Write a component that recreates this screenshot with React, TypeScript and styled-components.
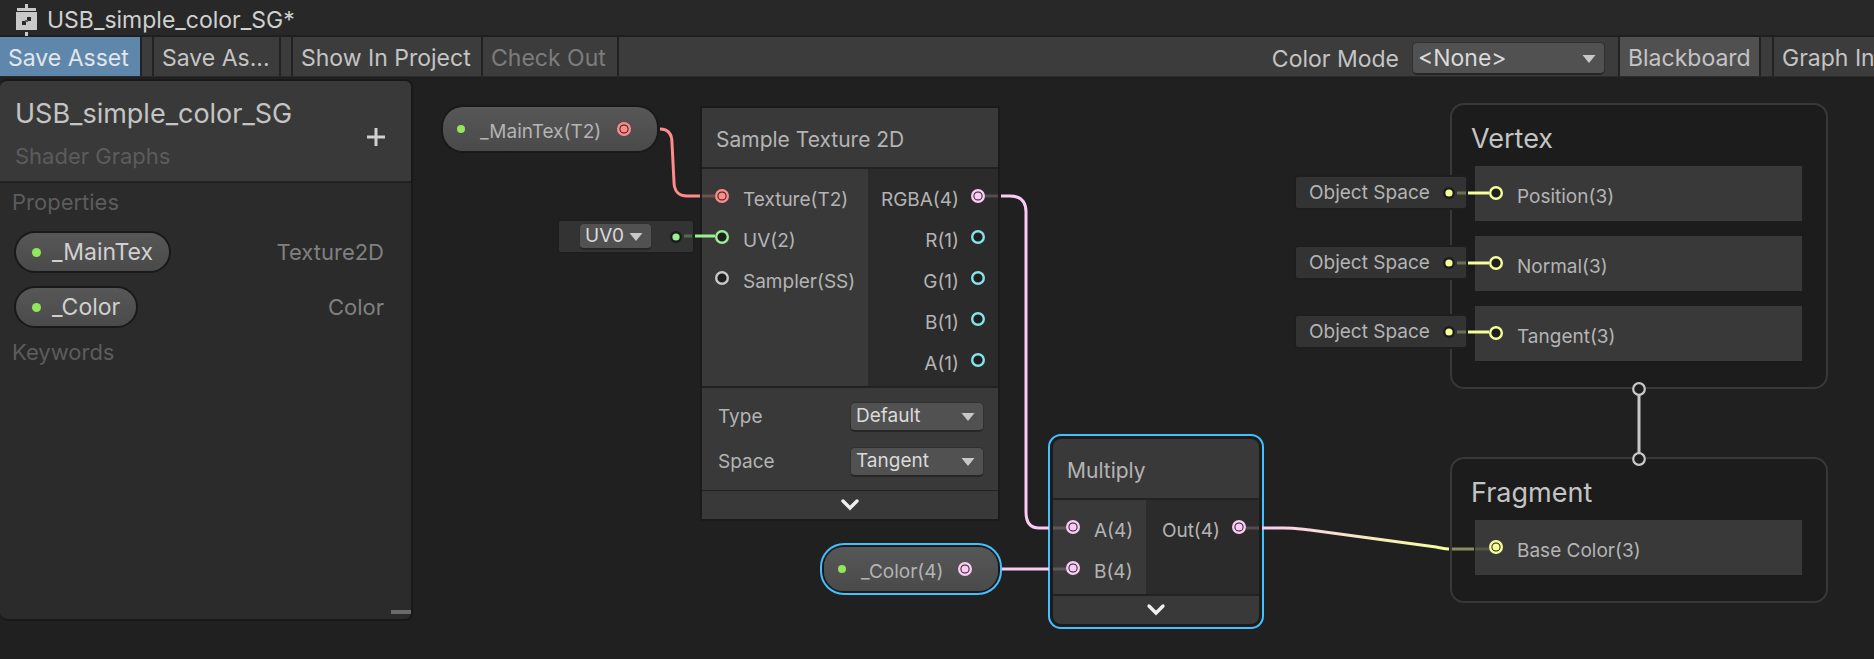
import React from "react";
import styled, { createGlobalStyle, css } from "styled-components";

const color = {
  text: "#c4c4c4",
  label: "#b4b4b4",
  muted: "#5c5c5c",
  panel: "#393939",
  panelDark: "#2b2b2b",
  canvas: "#202020",
  line: "#222222",
  select: "#515151",
  texture: "#ff8b8b",
  vec1: "#84e4e7",
  vec2: "#9aef92",
  vec3: "#f6ff9a",
  vec4: "#fbcbf4",
  exposed: "#92e65a",
  plain: "#c8c8c8",
  selected: "#44c0ff",
};

const GlobalStyle = createGlobalStyle`
  *, *::before, *::after { box-sizing: border-box; }
  html, body { margin: 0; background: ${color.canvas}; }
  body { font-family: Inter, "Liberation Sans", sans-serif; color: ${color.text}; }
  button, select { font: inherit; color: inherit; }
`;

const Page = styled.div`
  display: flex;
  flex-direction: column;
  min-height: 100vh;
  overflow: hidden;
`;

/* Window tab and toolbar */

const TitleBar = styled.header`
  display: flex;
  align-items: center;
  gap: 10px;
  height: 37px;
  padding: 4px 16px 0;
  background: #282828;
  border-bottom: 2px solid #1f1f1f;
`;

const TitleText = styled.h1`
  margin: 0;
  font-size: 23px;
  font-weight: 400;
  line-height: 32px;
  color: #d0d0d0;
`;

const Toolbar = styled.nav`
  display: flex;
  height: 40px;
  overflow: hidden;
  background: #3c3c3c;
  border-bottom: 1px solid #2a2a2a;
`;

const ToolGroup = styled.div`
  display: flex;
  flex: none;
`;

const Spacer = styled.div`
  flex: 1 1 0;
`;

const ToolGap = styled.div<{ $width: number }>`
  flex: none;
  width: ${(p) => p.$width}px;
`;

const ToolButton = styled.button<{ $tone?: "primary" | "active"; $bordered?: boolean; $width?: number }>`
  flex: none;
  width: ${(p) => (p.$width ? `${p.$width}px` : "auto")};
  padding: 3px 0 0 8px;
  border: 0;
  background: transparent;
  font-size: 23px;
  line-height: 36px;
  white-space: nowrap;
  text-align: left;
  border-right: 2px solid ${color.line};
  ${(p) => p.$bordered && css`border-left: 2px solid ${color.line};`}
  ${(p) => p.$tone === "primary" && css`background: #5f86ab; color: #e0e6ec;`}
  ${(p) => p.$tone === "active" && css`background: #505050;`}
  &:disabled { color: #7c7c7c; }
  &:last-child:not(:disabled) { border-right: 0; }
`;

const ModeLabel = styled.label`
  display: flex;
  align-items: center;
  gap: 13px;
  font-size: 23px;
  padding: 4px 13px 0 0;
`;

/* Drop-down */

const SelectBox = styled.span<{ $width: number; $height: number }>`
  position: relative;
  display: flex;
  flex: none;
  align-items: center;
  width: ${(p) => p.$width}px;
  height: ${(p) => p.$height}px;
`;

const Select = styled.select<{ $size: number }>`
  appearance: none;
  width: 100%;
  height: 100%;
  margin: 0;
  padding: 0 5px;
  border: 1px solid #303030;
  border-bottom: 2px solid #262626;
  border-radius: 5px;
  background: ${color.select};
  color: #dadada;
  font-size: ${(p) => p.$size}px;
  line-height: 24px;
`;

const Caret = styled.svg`
  position: absolute;
  right: 9px;
  fill: #c8c8c8;
  pointer-events: none;
`;

type DropdownProps = { id: string; value: string; options: string[]; width: number; height: number; size: number; label?: string };

function Dropdown({ id, value, options, width, height, size, label }: DropdownProps) {
  return (
    <SelectBox $width={width} $height={height}>
      <Select id={id} aria-label={label} defaultValue={value} $size={size}>
        {options.map((o) => (
          <option key={o}>{o}</option>
        ))}
      </Select>
      <Caret width="14" height="8" viewBox="0 0 14 8" aria-hidden="true">
        <path d="M0.5 0H13.5L7 8Z" />
      </Caret>
    </SelectBox>
  );
}

/* Blackboard */

const Workspace = styled.main`
  position: relative;
  display: flex;
  align-items: stretch;
  flex: 1;
  overflow: hidden;
`;

const Blackboard = styled.aside`
  display: flex;
  flex-direction: column;
  width: 413px;
  margin: 2px 0 38px;
  border: 2px solid #191919;
  border-left: 0;
  border-radius: 8px;
  background: ${color.panelDark};
  overflow: hidden;
`;

const BoardHeader = styled.div`
  display: flex;
  align-items: center;
  justify-content: space-between;
  height: 102px;
  padding: 0 25px 0 15px;
  background: ${color.panel};
  border-bottom: 2px solid ${color.line};
`;

const BoardTitle = styled.h2`
  margin: 0;
  padding-top: 4px;
  font-size: 27px;
  font-weight: 400;
  line-height: 40px;
`;

const BoardSubtitle = styled.p`
  margin: 0;
  padding: 8px 0 2px;
  font-size: 22px;
  line-height: 28px;
  color: ${color.muted};
`;

const AddButton = styled.button`
  display: flex;
  padding: 0;
  border: 0;
  margin-top: 12px;
  background: transparent;
`;

const BoardBody = styled.div`
  flex: 1;
  padding: 0 27px 0 14px;
`;

const SectionTitle = styled.h3`
  margin: 0 -2px;
  padding-top: 3px;
  font-size: 22px;
  font-weight: 400;
  line-height: 32px;
  color: ${color.muted};
`;

const PropertyList = styled.ul`
  display: grid;
  gap: 13px;
  margin: 0;
  padding: 13px 0 5px;
  list-style: none;
`;

const PropertyRow = styled.li`
  display: flex;
  align-items: center;
  justify-content: space-between;
`;

const PropertyPill = styled.span`
  display: flex;
  align-items: center;
  gap: 11px;
  height: 42px;
  padding: 0 16px;
  border: 2px solid #191919;
  border-radius: 21px;
  background: linear-gradient(#575757, #4a4a4a);
  font-size: 23px;
  color: #d0d0d0;
`;

const Dot = styled.i<{ $size: number }>`
  flex: none;
  width: ${(p) => p.$size}px;
  height: ${(p) => p.$size}px;
  border-radius: 50%;
  background: ${color.exposed};
`;

const PropertyType = styled.span`
  font-size: 22px;
  line-height: 32px;
  color: #808080;
`;

const ResizeGrip = styled.div`
  align-self: flex-end;
  width: 20px;
  height: 4px;
  margin-bottom: 5px;
  background: #6a6a6a;
`;

/* Graph nodes, placed on the free canvas */

type Spot = { $x: number; $y: number; $w: number };

const placed = css<Spot>`
  position: absolute;
  left: ${(p) => p.$x}px;
  top: ${(p) => p.$y}px;
  width: ${(p) => p.$w}px;
`;

const Edges = styled.svg`
  position: absolute;
  left: 0;
  top: 0;
  width: 100%;
  height: 100%;
  overflow: visible;
  fill: none;
  stroke-width: 3;
  pointer-events: none;
`;

const TokenNode = styled.div<Spot & { $selected?: boolean }>`
  ${placed}
  display: flex;
  align-items: center;
  height: 44px;
  padding: 0 26px 0 14px;
  border-radius: 20px;
  background: linear-gradient(#575757, #4a4a4a);
  box-shadow: ${(p) => (p.$selected ? `0 0 0 2px #191919, 0 0 0 4px ${color.selected}` : "0 0 0 2px #191919")};
`;

const TokenName = styled.span`
  flex: 1;
  padding: 6px 0 0 15px;
  font-size: 19px;
  line-height: 24px;
  color: ${color.label};
`;

const NodeCard = styled.section<Spot & { $selected?: boolean }>`
  ${placed}
  background: ${color.panel};
  box-shadow: 0 0 0 2px #1b1b1b;
  ${(p) => p.$selected && css`
    border-radius: 8px;
    box-shadow: 0 0 0 3px #1b1b1b, 0 0 0 5px ${color.selected};
  `}
`;

const NodeTitle = styled.h2`
  margin: 0;
  padding: 4px 14px 0;
  font-size: 21px;
  font-weight: 400;
  line-height: 55px;
  color: ${color.label};
  border-bottom: 2px solid ${color.line};
`;

const PortArea = styled.div<{ $inputs: number }>`
  display: grid;
  grid-template-columns: ${(p) => p.$inputs}px 1fr;
  border-bottom: 2px solid ${color.line};
`;

const PortColumn = styled.div<{ $side: "in" | "out" }>`
  padding: ${(p) => (p.$side === "in" ? "6px 0 6px 13px" : "6px 13px 6px 0")};
  ${(p) => p.$side === "out" && css`background: ${color.panelDark};`}
`;

const PortRow = styled.div<{ $side: "in" | "out" }>`
  display: flex;
  flex-direction: ${(p) => (p.$side === "in" ? "row" : "row-reverse")};
  align-items: center;
  gap: ${(p) => (p.$side === "in" ? 14 : 12)}px;
  height: 41px;
`;

const PortName = styled.span`
  padding-top: 9px;
  font-size: 19px;
  line-height: 24px;
  color: ${color.label};
`;

const Settings = styled.div`
  padding: 6px 14px 6px 16px;
  border-bottom: 1px solid ${color.line};
`;

const Setting = styled.div`
  display: flex;
  align-items: center;
  justify-content: space-between;
  height: 45px;
  font-size: 19px;
  color: ${color.label};
`;

const Collapse = styled.button`
  display: flex;
  align-items: center;
  justify-content: center;
  width: 100%;
  height: 28px;
  padding: 0;
  border: 0;
  background: transparent;
`;

const DefaultInput = styled.div<Spot>`
  ${placed}
  display: flex;
  align-items: center;
  justify-content: space-between;
  height: 31px;
  padding: 0 11px 0 13px;
  border-radius: 2px;
  background: #333333;
  box-shadow: 0 0 0 2px #1e1e1e;
  font-size: 19px;
  color: ${color.label};
`;

const DefaultUV = styled(DefaultInput)`
  padding-left: 20px;
`;

const StackBlock = styled.section<Spot>`
  ${placed}
  padding: 14px 24px 26px 23px;
  border: 2px solid #383838;
  border-radius: 14px;
  background: #1c1c1c;
`;

const StackTitle = styled.h2`
  margin: 0 -4px;
  padding-bottom: 7px;
  font-size: 27px;
  font-weight: 400;
  line-height: 40px;
`;

const SlotList = styled.div`
  display: grid;
  gap: 15px;
`;

const Slot = styled.div`
  display: flex;
  align-items: center;
  gap: 14px;
  height: 55px;
  padding: 0 0 2px 14px;
  background: ${color.panel};
`;

const PortRing = styled.svg`
  flex: none;
`;

function Port({ tint, linked }: { tint: string; linked?: boolean }) {
  return (
    <PortRing width="14" height="14" viewBox="0 0 14 14" aria-hidden="true">
      <circle cx="7" cy="7" r="5.8" fill="#1e1e1e" stroke={tint} strokeWidth="2.4" />
      {linked && <circle cx="7" cy="7" r="3.6" fill={tint} />}
    </PortRing>
  );
}

function Plug({ tint }: { tint: string }) {
  return (
    <svg width="12" height="12" viewBox="0 0 12 12" aria-hidden="true">
      <circle cx="6" cy="6" r="6" fill="#1c1c1c" />
      <circle cx="6" cy="6" r="3.6" fill={tint} />
    </svg>
  );
}

function Chevron() {
  return (
    <svg width="20" height="14" viewBox="0 0 20 14" fill="none" aria-hidden="true">
      <path d="M3 3L10 10L17 3" stroke="#f0f0f0" strokeWidth="3.4" strokeLinecap="round" />
    </svg>
  );
}

function GraphIcon() {
  return (
    <svg width="21" height="32" viewBox="0 0 21 32" aria-hidden="true">
      <path d="M9 0h3v4h8v3H1V4h8z" fill="#c9c9c9" />
      <path d="M0 8h21v18H0z" fill="#c9c9c9" />
      <path d="M9 28h3v4H9z" fill="#c9c9c9" />
      <path d="M11 13h4v4h-4zM6 17h4v4H6z" fill="#282828" />
      <path d="M9 16h3v2H9z" fill="#5a5a5a" />
    </svg>
  );
}

type PortSpec = { name: string; tint: string; linked?: boolean };

function Ports({ side, ports }: { side: "in" | "out"; ports: PortSpec[] }) {
  return (
    <PortColumn $side={side}>
      {ports.map((p) => (
        <PortRow key={p.name} $side={side}>
          <Port tint={p.tint} linked={p.linked} />
          <PortName>{p.name}</PortName>
        </PortRow>
      ))}
    </PortColumn>
  );
}

function Slots({ slots }: { slots: PortSpec[] }) {
  return (
    <SlotList>
      {slots.map((s) => (
        <Slot key={s.name}>
          <Port tint={s.tint} linked={s.linked} />
          <PortName>{s.name}</PortName>
        </Slot>
      ))}
    </SlotList>
  );
}

const sampleInputs: PortSpec[] = [
  { name: "Texture(T2)", tint: color.texture, linked: true },
  { name: "UV(2)", tint: color.vec2 },
  { name: "Sampler(SS)", tint: color.plain },
];

const sampleOutputs: PortSpec[] = [
  { name: "RGBA(4)", tint: color.vec4, linked: true },
  ...["R(1)", "G(1)", "B(1)", "A(1)"].map((name) => ({ name, tint: color.vec1 })),
];

const vertexSlots: PortSpec[] = ["Position(3)", "Normal(3)", "Tangent(3)"].map((name) => ({ name, tint: color.vec3 }));

const inputRows = [
  { y: 100, line: 116 },
  { y: 170, line: 186 },
  { y: 239, line: 255 },
];

export default function App() {
  return (
    <Page>
      <GlobalStyle />
      <TitleBar>
        <GraphIcon />
        <TitleText>USB_simple_color_SG*</TitleText>
      </TitleBar>

      <Toolbar aria-label="Graph toolbar">
        <ToolGroup>
          <ToolButton $tone="primary" $width={142}>Save Asset</ToolButton>
          <ToolGap $width={10} />
          <ToolButton $bordered $width={129}>Save As...</ToolButton>
          <ToolGap $width={10} />
          <ToolButton $bordered $width={192}>Show In Project</ToolButton>
          <ToolButton disabled $width={136}>Check Out</ToolButton>
        </ToolGroup>
        <Spacer />
        <ToolGroup>
          <ModeLabel htmlFor="color-mode">
            Color Mode
            <Dropdown id="color-mode" value="<None>" options={["<None>", "Category", "Precision"]} width={193} height={33} size={23} />
          </ModeLabel>
          <ToolButton $tone="active" $bordered $width={143}>Blackboard</ToolButton>
          <ToolGap $width={11} />
          <ToolButton $bordered $width={102}>Graph In</ToolButton>
        </ToolGroup>
      </Toolbar>

      <Workspace>
        <Blackboard aria-label="Blackboard">
          <BoardHeader>
            <div>
              <BoardTitle>USB_simple_color_SG</BoardTitle>
              <BoardSubtitle>Shader Graphs</BoardSubtitle>
            </div>
            <AddButton aria-label="Add property">
              <svg width="20" height="20" viewBox="0 0 20 20" aria-hidden="true">
                <path d="M10 1V19M1 10H19" stroke="#d0d0d0" strokeWidth="3" />
              </svg>
            </AddButton>
          </BoardHeader>
          <BoardBody>
            <SectionTitle>Properties</SectionTitle>
            <PropertyList>
              <PropertyRow>
                <PropertyPill><Dot $size={9} />_MainTex</PropertyPill>
                <PropertyType>Texture2D</PropertyType>
              </PropertyRow>
              <PropertyRow>
                <PropertyPill><Dot $size={9} />_Color</PropertyPill>
                <PropertyType>Color</PropertyType>
              </PropertyRow>
            </PropertyList>
            <SectionTitle>Keywords</SectionTitle>
          </BoardBody>
          <ResizeGrip />
        </Blackboard>

        <TokenNode $x={443} $y={30} $w={214}>
          <Dot $size={8} />
          <TokenName>_MainTex(T2)</TokenName>
          <Port tint={color.texture} linked />
        </TokenNode>

        <TokenNode $x={824} $y={470} $w={174} $selected>
          <Dot $size={8} />
          <TokenName>_Color(4)</TokenName>
          <Port tint={color.vec4} linked />
        </TokenNode>

        <DefaultUV $x={559} $y={144} $w={134}>
          <Dropdown id="uv-channel" label="UV channel" value="UV0" options={["UV0", "UV1", "UV2", "UV3"]} width={73} height={27} size={19} />
          <Plug tint={color.vec2} />
        </DefaultUV>

        <NodeCard $x={702} $y={31} $w={296}>
          <NodeTitle>Sample Texture 2D</NodeTitle>
          <PortArea $inputs={166}>
            <Ports side="in" ports={sampleInputs} />
            <Ports side="out" ports={sampleOutputs} />
          </PortArea>
          <Settings>
            <Setting>
              <label htmlFor="texture-type">Type</label>
              <Dropdown id="texture-type" value="Default" options={["Default", "Normal"]} width={134} height={30} size={19} />
            </Setting>
            <Setting>
              <label htmlFor="texture-space">Space</label>
              <Dropdown id="texture-space" value="Tangent" options={["Tangent", "Object"]} width={134} height={30} size={19} />
            </Setting>
          </Settings>
          <Collapse aria-label="Collapse preview"><Chevron /></Collapse>
        </NodeCard>

        <NodeCard $x={1053} $y={362} $w={206} $selected>
          <NodeTitle>Multiply</NodeTitle>
          <PortArea $inputs={93}>
            <Ports
              side="in"
              ports={[
                { name: "A(4)", tint: color.vec4, linked: true },
                { name: "B(4)", tint: color.vec4, linked: true },
              ]}
            />
            <Ports side="out" ports={[{ name: "Out(4)", tint: color.vec4, linked: true }]} />
          </PortArea>
          <Collapse aria-label="Collapse preview"><Chevron /></Collapse>
        </NodeCard>

        <StackBlock $x={1450} $y={26} $w={378}>
          <StackTitle>Vertex</StackTitle>
          <Slots slots={vertexSlots} />
        </StackBlock>

        <StackBlock $x={1450} $y={380} $w={378}>
          <StackTitle>Fragment</StackTitle>
          <Slots slots={[{ name: "Base Color(3)", tint: color.vec3, linked: true }]} />
        </StackBlock>

        {inputRows.map((row) => (
          <DefaultInput key={row.y} $x={1296} $y={row.y} $w={170}>
            Object Space
            <Plug tint={color.vec3} />
          </DefaultInput>
        ))}

        <Edges aria-hidden="true">
          <defs>
            <linearGradient id="vec4-to-vec3" gradientUnits="userSpaceOnUse" x1="1261" y1="0" x2="1450" y2="0">
              <stop offset="0" stopColor={color.vec4} />
              <stop offset="1" stopColor={color.vec3} />
            </linearGradient>
          </defs>

          <path d="M660 52C668 52 672 57 672 66L674 105C674 114 679 119 687 119H700" stroke={color.texture} />
          <path d="M702 119H715" stroke={color.texture} strokeOpacity="0.3" />

          <path d="M684 159H692" stroke={color.vec2} strokeOpacity="0.3" />
          <path d="M695 159H715" stroke={color.vec2} />

          <path d="M985 119H998" stroke={color.vec4} strokeOpacity="0.2" />
          <path d="M1001 119H1010C1020 119 1026 124 1026 135V435C1026 446 1031 451 1039 451H1049" stroke={color.vec4} />
          <path d="M1053 451H1066" stroke={color.vec4} strokeOpacity="0.2" />

          <path d="M1002 492H1049" stroke={color.vec4} />
          <path d="M1053 492H1066" stroke={color.vec4} strokeOpacity="0.2" />

          <path d="M1246 451H1259" stroke={color.vec4} strokeOpacity="0.2" />
          <path d="M1262 451H1284C1294 451 1300 452 1310 453L1436 470C1442 471 1444 472 1449 472" stroke="url(#vec4-to-vec3)" />
          <path d="M1452 472H1474" stroke={color.vec3} strokeOpacity="0.5" />
          <path d="M1475 472H1489" stroke={color.vec3} strokeOpacity="0.15" />

          {inputRows.map((row) => (
            <g key={row.line} stroke={color.vec3}>
              <path d={`M1457 ${row.line}H1466`} strokeOpacity="0.3" />
              <path d={`M1468 ${row.line}H1489`} />
            </g>
          ))}

          <path d="M1639 312V382" stroke={color.plain} />
          <circle cx="1639" cy="312" r="5.8" fill="#1e1e1e" stroke={color.plain} strokeWidth="2.2" />
          <circle cx="1639" cy="382" r="5.8" fill="#1e1e1e" stroke={color.plain} strokeWidth="2.2" />
        </Edges>
      </Workspace>
    </Page>
  );
}
